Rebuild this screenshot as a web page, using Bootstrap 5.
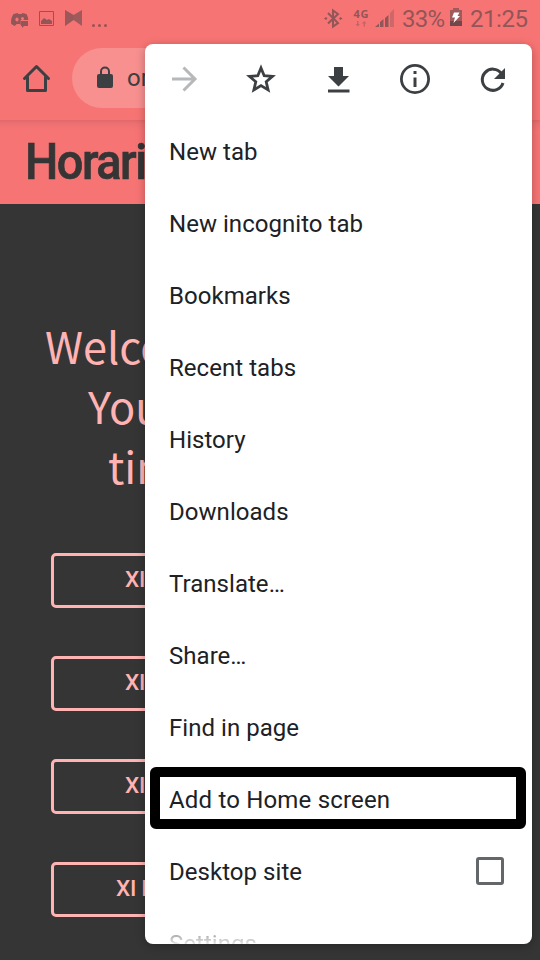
<!DOCTYPE html>
<html lang="en">
<head>
<meta charset="utf-8">
<meta name="viewport" content="width=device-width, initial-scale=1">
<title>Horario</title>
<link href="https://cdn.jsdelivr.net/npm/bootstrap@5.3.0/dist/css/bootstrap.min.css" rel="stylesheet">
<style>
body{width:540px;height:960px;background:#353535;font-family:Roboto,sans-serif;color:#202124}
svg{display:block;flex:none}
.status{height:38px;padding:0 12px 0 10px;background:#f77474;color:#925658;font-size:24px}
.toolbar{height:82px;padding:10px 0 12px 20px;background:#f77474}
.address{height:60px;width:440px;margin-left:20px;padding-left:24px;border-radius:30px;background:#f89090;font-size:24px;color:#3c4043}
.clip{overflow:hidden;margin-left:13px}
.site-head{height:84px;padding-left:25px;background:linear-gradient(#df696a 0,#ef7071 4px,#f77474 11px);color:#353535;font-size:50.500px;font-weight:500;line-height:83px;letter-spacing:-1.6px;-webkit-text-stroke:.7px #353535}
.site-head span{display:inline-block;transform:scaleX(.93);transform-origin:left}
.welcome{padding-top:111px;height:349px;color:#ffb3b3;font:43.3px/60px "Noto Sans CJK SC",sans-serif;white-space:nowrap}
.l1{padding-left:45px}.l2{padding-left:88px}.l3{padding-left:108px}
.choices{gap:48px;padding-left:51px}
.choice{height:55px;width:438px;border:3px solid #ffb3b3;border-radius:5px;color:#ffb3b3;font-size:22.5px;font-weight:500;line-height:45px;padding:0 0 2px 71px;text-align:left;letter-spacing:-.3px}
.choice:last-child{padding-left:62px}
.menu{left:145px;top:44px;width:387px;height:900px;border-radius:8px;background:#fff;box-shadow:0 2px 10px rgba(0,0,0,.28)}
.actions{height:70px;margin-bottom:2px;padding:0 22px}
.entry{height:72px;padding:0 28px 0 24px;font-size:24px;line-height:72px;letter-spacing:.04px;flex:none;white-space:nowrap}
.marked{position:relative;letter-spacing:.18px}
.marked::after{content:"";position:absolute;left:5px;top:3px;width:376px;height:62px;border:10px solid #000;border-radius:6px}
.box{width:28px;height:28px;margin-top:-2px;border:3px solid #63676a;border-radius:3px}
.fade-row{color:#999;height:36px;overflow:hidden;-webkit-mask-image:linear-gradient(#000 24px,transparent 40px);mask-image:linear-gradient(#000 24px,transparent 40px)}
</style>
</head>
<body class="m-0 overflow-hidden position-relative">
<header>
 <div class="status d-flex align-items-center">
  <svg width="104" height="38" viewBox="0 0 104 38" fill="#925658">
   <path d="M3.500 14l4-1 1 1h3l1-1 4 1c1.500 3 1.800 4 1.700 6h-7.500v5l-1-1h-3l-2 2-3.500-2c-.5-4 .3-7 2.300-10z"/><ellipse cx="7" cy="19.500" rx="1.600" ry="2" fill="#f77474"/><ellipse cx="12.500" cy="18.500" rx="1.500" ry="1.500" fill="#f77474"/><path d="M11 21h7v5h-4l-2 2v-2h-1z"/>
   <path d="M29.500 11.500h14v14h-14z" fill="none" stroke="#925658"/><path d="M31 24v-3l3-3 3 2 2-1 3 2v3z"/>
   <path d="M55 10l8.500 5L72 10v16l-8.500-6L55 26z" opacity=".85"/><path d="M55 10l8.500 5v5L55 26z" opacity=".4"/>
   <circle cx="83.500" cy="25.500" r="1.500"/><circle cx="89.500" cy="25.500" r="1.500"/><circle cx="95.500" cy="25.500" r="1.500"/>
  </svg>
  <svg class="ms-auto" width="206" height="38" viewBox="322 0 206 38" fill="#925658">
   <path d="M328 13l10 10-5 3.500V10.500l5 3.500-10 9.500" fill="none" stroke="#925658" stroke-width="2"/><path d="M324 18.500l2-1.500 1.500 1.500-1.500 1.500zM342.500 18.500l-2-1.500-1.500 1.500 1.500 1.500z"/>
   <text x="353.500" y="18" font-size="11" font-weight="700" font-family="Open Sans" textLength="15">4G</text>
   <path d="M357 21h1.500v3h1.500l-2.200 2.500-2.300-2.500H357zM363.500 26.500v-3H362l2.200-2.500 2.300 2.500H365v3z" opacity=".5"/>
   <path d="M375 27l4-3.500V27zM380 22l3.500-3v8H380zM385 18l3.500-3v12H385z"/><path d="M390 13l4-4v18h-4z" opacity=".4"/>
   <text x="402" y="27" font-size="24" textLength="43">33%</text>
   <path d="M450 10h3V8h6v2h3v16h-12z" opacity=".85"/><path d="M450 21h12v5h-12z" fill="#70474a"/><path d="M454 12.500h5.500l-2 3.500h2.500l-6.500 7 1.500-5.500h-3z" fill="#fff"/>
   <text x="470" y="27" font-size="24" textLength="58">21:25</text>
  </svg>
 </div>
 <div class="toolbar d-flex align-items-center">
  <svg width="32" height="32" viewBox="20 63 32 32" fill="none" stroke="#3c4043" stroke-width="3" stroke-linejoin="round"><path d="M24.500 79.500L36.500 67.500l12 12M27.500 78v13.500h18V78" stroke-linecap="round"/></svg>
  <div class="address d-flex align-items-center">
   <svg width="18" height="24" viewBox="0 0 18 24"><rect x="1" y="8" width="16" height="14" rx="2" fill="#3c4043"/><path d="M5 9V5.500a4 4 0 0 1 8 0V9" fill="none" stroke="#3c4043" stroke-width="2"/></svg>
   <div class="clip">or</div>
  </div>
 </div>
</header>
<main>
 <div class="site-head"><span>Horari</span></div>
 <div class="welcome"><div class="l1">Welco</div><div class="l2">You</div><div class="l3">tim</div></div>
 <div class="choices d-flex flex-column">
  <button class="btn choice">XI</button><button class="btn choice">XI</button><button class="btn choice">XI</button><button class="btn choice">XI I</button>
 </div>
</main>
<nav class="menu position-absolute d-flex flex-column">
 <div class="actions d-flex align-items-center justify-content-between">
  <svg width="34" height="34" viewBox="167 62 34 34" fill="none" stroke="#b6b8b9" stroke-width="3"><path d="M172 79h22M183.500 67.500L195 79l-11.500 11.500"/></svg>
  <svg width="34" height="34" viewBox="244 62 34 34" fill="none" stroke="#3c4043" stroke-width="2.800"><path d="M261 68l3.200 7.700 8.300.7-6.300 5.400 1.900 8.100-7.100-4.300-7.100 4.300 1.900-8.100-6.300-5.400 8.300-.7z"/></svg>
  <svg width="34" height="34" viewBox="321.500 62 34 34" fill="#3c4043"><path d="M333.500 67h9v9h6L338 86.500 327.500 76h6zM327.500 89.500h21.500v3h-21.500z"/></svg>
  <svg width="34" height="34" viewBox="399 62 34 34"><circle cx="415" cy="79" r="13.600" fill="none" stroke="#3c4043" stroke-width="2.800"/><path d="M413.500 71h3v3h-3zM413.500 77.500h3V87h-3z" fill="#3c4043"/></svg>
  <svg width="34" height="34" viewBox="476 62 34 34"><path d="M501.500 73.500A10.600 10.600 0 1 0 503 83" fill="none" stroke="#3c4043" stroke-width="3"/><path d="M505 68v11h-11z" fill="#3c4043"/></svg>
 </div>
 <div class="entry">New tab</div>
 <div class="entry">New incognito tab</div>
 <div class="entry">Bookmarks</div>
 <div class="entry">Recent tabs</div>
 <div class="entry">History</div>
 <div class="entry">Downloads</div>
 <div class="entry">Translate…</div>
 <div class="entry">Share…</div>
 <div class="entry">Find in page</div>
 <div class="entry marked">Add to Home screen</div>
 <div class="entry d-flex align-items-center justify-content-between">Desktop site<span class="box"></span></div>
 <div class="entry fade-row">Settings</div>
</nav>
<script src="https://cdn.jsdelivr.net/npm/bootstrap@5.3.0/dist/js/bootstrap.bundle.min.js"></script>
</body>
</html>
